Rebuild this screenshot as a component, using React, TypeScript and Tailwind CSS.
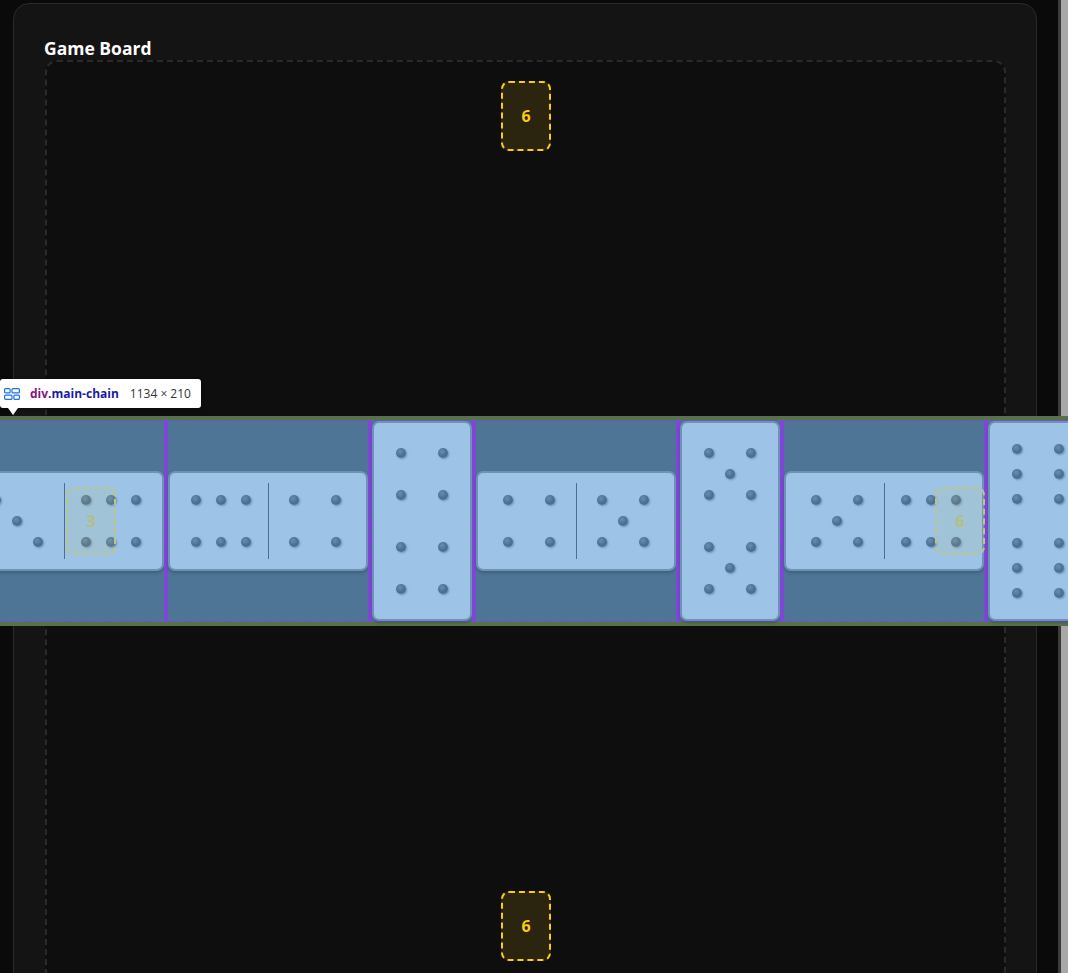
import clsx from 'clsx';

const cn = clsx;

type Spot = [number, number];

const spots: Record<number, Spot[]> = {
  3: [[1, 1], [2, 2], [3, 3]],
  4: [[1, 1], [3, 1], [1, 3], [3, 3]],
  5: [[1, 1], [3, 1], [2, 2], [1, 3], [3, 3]],
  6: [[1, 1], [2, 1], [3, 1], [1, 3], [2, 3], [3, 3]],
};

const colStart = ['', 'col-start-1', 'col-start-2', 'col-start-3'];
const rowStart = ['', 'row-start-1', 'row-start-2', 'row-start-3'];

function Half({ value, vertical }: { value: number; vertical?: boolean }) {
  const wide = value === 6;
  let grid = 'grid-cols-[repeat(3,21px)] grid-rows-[repeat(3,21px)]';
  if (wide && !vertical) grid = 'grid-cols-[repeat(3,25px)] grid-rows-[repeat(3,21px)]';
  if (wide && vertical) grid = 'grid-cols-[repeat(3,21px)] grid-rows-[repeat(3,25px)]';

  return (
    <div className="flex flex-1 items-center justify-center">
      <div className={cn('grid place-items-center', grid)}>
        {spots[value].map(([c, r], i) => {
          const col = vertical ? r : c;
          const row = vertical ? c : r;
          return (
            <span
              key={i}
              className={cn(
                colStart[col],
                rowStart[row],
                'size-[10px] rounded-full bg-[radial-gradient(circle_at_40%_35%,#6a8eae_0%,#4d7192_50%,#43668a_100%)] shadow-[1px_1px_2px_rgba(50,80,110,0.45)]'
              )}
            />
          );
        })}
      </div>
    </div>
  );
}

function Domino({ a, b, vertical }: { a: number; b: number; vertical?: boolean }) {
  if (vertical) {
    return (
      <div className="flex h-[200px] w-[100px] shrink-0 flex-col rounded-[7px] border-2 border-[#6e92b3] bg-[#9dc3e6] py-[5px] shadow-[0_2px_3px_rgba(30,50,70,0.3)]">
        <Half value={a} vertical />
        <div className="h-px" />
        <Half value={b} vertical />
      </div>
    );
  }
  return (
    <div className="flex h-[100px] w-[200px] shrink-0 items-center rounded-[7px] border-2 border-[#6e92b3] bg-[#9dc3e6] px-[5px] shadow-[0_2px_3px_rgba(30,50,70,0.3)]">
      <Half value={a} />
      <div className="h-[76px] w-px bg-[#4e7090]" />
      <Half value={b} />
    </div>
  );
}

function GapStrip() {
  return (
    <div className="h-full w-1 shrink-0 border-x border-dotted border-[#8a3ee6] bg-[repeating-linear-gradient(135deg,#8a3ee6_0px,#8a3ee6_1px,#6a55bc_1px,#6a55bc_2px)]" />
  );
}

const chain = [
  { a: 3, b: 6 },
  { a: 6, b: 4 },
  { a: 4, b: 4, vertical: true },
  { a: 4, b: 5 },
  { a: 5, b: 5, vertical: true },
  { a: 5, b: 6 },
  { a: 6, b: 6, vertical: true },
];

function EndSlot({ value }: { value: number }) {
  return (
    <div className="flex h-[70px] w-[50px] shrink-0 items-center justify-center rounded-lg border-2 border-dashed border-[#facc15] bg-[#2b2510] text-[16px] font-bold text-[#facc15]">
      {value}
    </div>
  );
}

function ScrollStrip({ base, green, blue, width }: { base: string; green: string; blue: string; width: string }) {
  return (
    <div className={cn('flex h-full flex-col', width)}>
      <div className={cn('h-[416px]', base)} />
      <div className={cn('h-[5px]', green)} />
      <div className={cn('h-[200px]', blue)} />
      <div className={cn('h-[5px]', green)} />
      <div className={cn('flex-1', base)} />
    </div>
  );
}

export default function App() {
  return (
    <div
      className="relative flex h-screen overflow-hidden bg-[#0a0a0a]"
      style={{ fontFamily: '"Open Sans", "Noto Sans", sans-serif' }}
    >
      <main className="min-w-0 flex-1 pl-[13px] pr-[21px] pt-[3px]">
        <section className="flex flex-col rounded-2xl border border-[#2a2a2a] bg-[#141414] pb-8 pl-[31px] pr-[30px] pt-[33px]">
          <h2 className="-ml-px mb-px text-[17.5px] font-bold leading-[22px] text-white">Game Board</h2>

          <div className="relative flex h-[922px] flex-col items-center justify-between rounded-xl border-2 border-dashed border-[#2a2a2a] bg-[#0e0e0e] pb-[19px] pl-[20px] pr-[19px] pt-[19px]">
            <EndSlot value={6} />

            {/* main chain, shown with the inspector highlight */}
            <div className="main-chain w-[1134px] shrink-0 bg-[#57724b] px-[5px] py-[4px]">
              <div className="flex h-[202px] items-center border-y border-dashed border-[#8a3ee6] bg-[#4e7496]">
                {chain.map((d, i) => (
                  <div key={i} className="contents">
                    {i > 0 && <GapStrip />}
                    <Domino a={d.a} b={d.b} vertical={d.vertical} />
                  </div>
                ))}
              </div>
            </div>

            <EndSlot value={6} />

            <div className="absolute left-[19px] top-1/2 flex h-[68px] w-[50px] -translate-y-1/2 items-center justify-center rounded-lg border-2 border-dashed border-[#bcc58c] bg-[rgba(200,200,110,0.12)] text-[16px] font-bold text-[#b3bf80]">
              3
            </div>
            <div className="absolute right-[19px] top-1/2 flex h-[68px] w-[50px] -translate-y-1/2 items-center justify-center rounded-lg border-2 border-dashed border-[#bcc58c] bg-[rgba(200,200,110,0.12)] text-[16px] font-bold text-[#b3bf80]">
              6
            </div>
          </div>
        </section>
      </main>

      <div className="flex h-full w-[10px] shrink-0">
        <ScrollStrip width="w-[3px]" base="bg-[#3c3c3c]" green="bg-[#68805c]" blue="bg-[#6f90ae]" />
        <ScrollStrip width="w-[7px]" base="bg-[#a8a8a8]" green="bg-[#9aa88e]" blue="bg-[#aeb9c4]" />
      </div>

      {/* inspector tooltip */}
      <div className="absolute left-0 top-[379px] flex h-[29px] w-[201px] items-center rounded-[3px] bg-white pl-[4px] shadow-[0_1px_4px_rgba(0,0,0,0.3)]">
        <svg width="16" height="12" viewBox="0 0 16 12" fill="none" stroke="#1a73e8" strokeWidth="1.2">
          <rect x="0.6" y="0.6" width="5.5" height="4.3" rx="1" />
          <rect x="8" y="0.6" width="7.4" height="4.3" rx="1" />
          <rect x="0.6" y="7.1" width="7.4" height="4.3" rx="1" />
          <rect x="9.9" y="7.1" width="5.5" height="4.3" rx="1" />
        </svg>
        <span className="ml-[10px] text-[12px] font-bold text-[#881280]">div</span>
        <span className="text-[12px] font-bold text-[#1a1aa6]">.main-chain</span>
        <span className="ml-[11px] text-[12px] text-[#333]">1134 × 210</span>
        <div className="absolute -bottom-[7px] left-[8px] h-0 w-0 border-x-[5px] border-t-[7px] border-x-transparent border-t-white" />
      </div>
    </div>
  );
}
